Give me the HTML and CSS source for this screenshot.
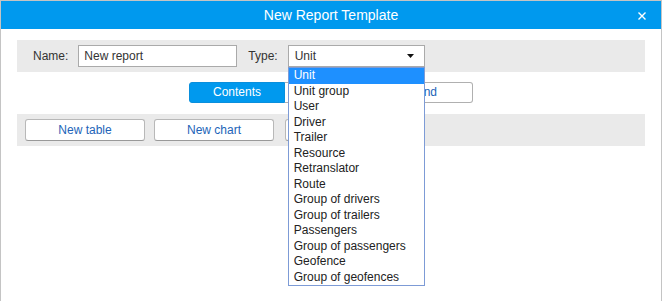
FILE: index.html
```html
<!DOCTYPE html>
<html>
<head>
<meta charset="utf-8">
<link rel="stylesheet" href="styles.css">
</head>
<body>
<div class="window">
  <div class="titlebar">
    <span class="title">New Report Template</span>
    <span class="close"><svg width="8" height="8" viewBox="0 0 8 8"><path d="M0.5 0.5 L7.5 7.5 M7.5 0.5 L0.5 7.5" stroke="#fff" stroke-width="1.4" fill="none"/></svg></span>
  </div>
  <div class="content">
    <div class="bar namebar">
      <span class="lbl">Name:</span>
      <div class="input">New report</div>
      <span class="lbl type-lbl">Type:</span>
      <div class="select-wrap">
        <div class="select"><span>Unit</span><svg class="arrow" width="7" height="4" viewBox="0 0 7 4"><path d="M0 0 H7 L3.5 4 Z" fill="#111"/></svg></div>
        <ul class="dropdown">
          <li class="sel">Unit</li>
          <li>Unit group</li>
          <li>User</li>
          <li>Driver</li>
          <li>Trailer</li>
          <li>Resource</li>
          <li>Retranslator</li>
          <li>Route</li>
          <li>Group of drivers</li>
          <li>Group of trailers</li>
          <li>Passengers</li>
          <li>Group of passengers</li>
          <li>Geofence</li>
          <li>Group of geofences</li>
        </ul>
      </div>
    </div>
    <div class="tabs">
      <div class="tab active">Contents</div>
      <div class="tab second">Background</div>
    </div>
    <div class="bar toolbar">
      <div class="btn">New table</div>
      <div class="btn">New chart</div>
      <div class="btn">New row</div>
    </div>
  </div>
</div>
</body>
</html>
```
FILE: styles.css
```css
* { box-sizing: border-box; }
html, body { margin: 0; padding: 0; background: #fff; }
body { font-family: "Liberation Sans", Arial, sans-serif; font-size: 12px; color: #333; }

.window {
  width: 662px;
  height: 301px;
  border: 1px solid #c4c4c4;
  border-bottom: none;
  background: #fff;
}
.titlebar {
  height: 28px;
  background: #0099ee;
  display: flex;
  align-items: center;
  justify-content: center;
  position: relative;
}
.title { color: #fff; font-size: 14px; }
.close {
  position: absolute;
  left: 637px;
  top: 11px;
  width: 8px;
  height: 8px;
  display: block;
}
.close svg { display: block; }

.content { padding: 11px 16px 0 16px; }

.bar {
  background: #eaeaea;
  height: 32px;
  display: flex;
  align-items: center;
}
.namebar { padding-left: 16px; }
.lbl { margin-right: 10px; }
.type-lbl { margin-left: 11px; }
.input {
  width: 159px;
  height: 22px;
  border: 1px solid #aaa;
  background: #fff;
  padding-left: 5px;
  line-height: 20px;
  color: #333;
}
.select-wrap { position: relative; }
.select {
  width: 137px;
  height: 22px;
  border: 1px solid #aaa;
  background: #fff;
  padding-left: 6px;
  padding-right: 10px;
  line-height: 20px;
  display: flex;
  justify-content: space-between;
  align-items: center;
}
.arrow { display: block; }
.dropdown {
  position: absolute;
  left: 0;
  top: 22px;
  width: 137px;
  margin: 0;
  padding: 0;
  list-style: none;
  background: #fff;
  border: 1px solid #7d9bd6;
  z-index: 10;
}
.dropdown li {
  line-height: 15.5px;
  height: 15.5px;
  padding-left: 5px;
  color: #222;
  white-space: nowrap;
}
.dropdown li.sel { background: #1e90ff; color: #fff; }

.tabs {
  margin-top: 10px;
  display: flex;
  justify-content: center;
}
.tab {
  height: 21px;
  line-height: 19px;
  border: 1px solid #b0b0b0;
  background: #fff;
  color: #2264b8;
  text-align: center;
}
.tab.active {
  width: 96px;
  background: #0099ee;
  border-color: #0a8fdc;
  color: #fff;
  border-radius: 3px 0 0 3px;
}
.tab.second {
  width: 188px;
  border-left: none;
  border-radius: 0 3px 3px 0;
  text-align: right;
  padding-right: 35px;
}

.toolbar {
  margin-top: 11px;
  padding-left: 8px;
  gap: 9px;
}
.btn {
  width: 120px;
  height: 22px;
  line-height: 20px;
  border: 1px solid #b8b8b8;
  border-bottom-color: #999;
  border-radius: 3px;
  background: #fff;
  color: #2264b8;
  text-align: center;
}
.btn + .btn + .btn { margin-left: 2px; }
```
